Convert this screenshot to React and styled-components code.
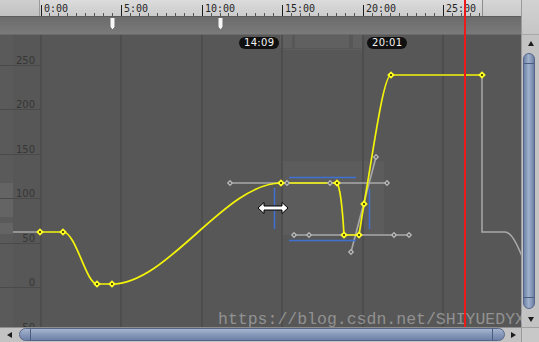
import React from "react";
import styled, { createGlobalStyle } from "styled-components";

const Global = createGlobalStyle`
  html, body { margin: 0; padding: 0; background: #575757; }
  body { font-family: "DejaVu Sans", sans-serif; }
`;

const X0 = 40.5;
const PX5 = 80.55; // px per 5 seconds
const tx = (sec) => X0 + (sec / 5) * PX5;

const Frame = styled.div`
  position: relative;
  width: 539px;
  height: 342px;
  display: grid;
  grid-template-columns: 521px 18px;
  grid-template-rows: 17px 18px 292px 15px;
  overflow: hidden;
  background: #575757;
`;

const Ruler = styled.div`
  grid-column: 1;
  grid-row: 1;
  display: flex;
  box-sizing: border-box;
  border-bottom: 1px solid #5c5c5c;
  background: linear-gradient(#dcdcdc, #cbcbcb);
`;

const RulerCorner = styled.div`
  width: 40px;
  flex: 0 0 40px;
  background: linear-gradient(#cfcfcf, #c1c1c1);
  border-right: 1px solid #9a9a9a;
  box-sizing: border-box;
`;

const RulerSvg = styled.svg`
  flex: 0 0 442px;
  height: 16px;
  display: block;
`;

const RulerEnd = styled.div`
  flex: 1;
  border-left: 1px solid #8c8c8c;
  background: linear-gradient(#d6d6d6, #c9c9c9);
`;

const EventsBar = styled.div`
  grid-column: 1;
  grid-row: 2;
  position: relative;
  box-sizing: border-box;
  background: linear-gradient(#6c6c6c, #757575 70%, #7b7b7b);
  border-bottom: 1px solid #6a6a6a;
`;

const Marker = styled.svg`
  position: absolute;
  top: 0;
  width: 7px;
  height: 14px;
`;

const Graph = styled.div`
  grid-column: 1;
  grid-row: 3;
  position: relative;
  overflow: hidden;
  background: #575757;
`;

const CurveSvg = styled.svg`
  display: block;
  width: 521px;
  height: 292px;
`;

const Pill = styled.div`
  position: absolute;
  top: 2px;
  height: 12px;
  padding: 0 5px;
  border-radius: 6px;
  background: #101010;
  color: #f4f4f4;
  font: 10px/12px "DejaVu Sans", sans-serif;
  letter-spacing: 0.3px;
`;

const Cursor = styled.svg`
  position: absolute;
  left: 256px;
  top: 166px;
  width: 34px;
  height: 14px;
`;

const SideColumn = styled.div`
  grid-column: 2;
  grid-row: 1 / 4;
  display: flex;
  flex-direction: column;
  background: #c4c4c4;
  border-left: 1px solid #9a9a9a;
`;

const SideTop = styled.div`
  flex: 0 0 35px;
  background: linear-gradient(#d2d2d2, #c6c6c6);
  border-bottom: 1px solid #a8a8a8;
  box-sizing: border-box;
`;

const VScroll = styled.div`
  flex: 1;
  display: flex;
  flex-direction: column;
  background: #c3c3c3;
`;

const ArrowBtn = styled.div`
  flex: 0 0 ${(p) => p.$size}px;
  display: flex;
  align-items: center;
  justify-content: center;
`;

const Tri = styled.div`
  width: 0;
  height: 0;
  ${(p) =>
    p.$dir === "up"
      ? "border-left:3.5px solid transparent;border-right:3.5px solid transparent;border-bottom:5px solid #1c1c1c;"
      : p.$dir === "down"
      ? "border-left:3.5px solid transparent;border-right:3.5px solid transparent;border-top:5px solid #1c1c1c;"
      : p.$dir === "left"
      ? "border-top:3.5px solid transparent;border-bottom:3.5px solid transparent;border-right:5px solid #1c1c1c;"
      : "border-top:3.5px solid transparent;border-bottom:3.5px solid transparent;border-left:5px solid #1c1c1c;"}
`;

const VThumb = styled.div`
  position: relative;
  flex: 1;
  margin: 2px 4px 2px 1px;
  border: 1px solid #56668a;
  border-radius: 7px;
  background: linear-gradient(90deg, #6f82a7, #9fb0cb 45%, #8a9cbc 70%, #6b7ea3);
  &::before,
  &::after {
    content: "";
    position: absolute;
    left: 0;
    right: 0;
    height: 1px;
    background: #4d5d7e;
  }
  &::before { top: 9px; }
  &::after { bottom: 10px; }
`;

const HScroll = styled.div`
  grid-column: 1;
  grid-row: 4;
  display: flex;
  box-sizing: border-box;
  border-top: 1px solid #8e8e8e;
  background: #c3c3c3;
`;

const HThumb = styled.div`
  position: relative;
  flex: 1;
  margin: 0 1px 1px 1px;
  border: 1px solid #56668a;
  border-radius: 7px;
  background: linear-gradient(#a7b6cf, #8799bb 50%, #6e81a6);
  &::before,
  &::after {
    content: "";
    position: absolute;
    top: 0;
    bottom: 0;
    width: 1px;
    background: #4d5d7e;
  }
  &::before { left: 10px; }
  &::after { right: 11px; }
`;

const Corner = styled.div`
  grid-column: 2;
  grid-row: 4;
  background: #c8c8c8;
  border-left: 1px solid #9a9a9a;
  border-top: 1px solid #a0a0a0;
`;

const Playhead = styled.div`
  position: absolute;
  left: 464px;
  top: 0;
  width: 2px;
  height: 327px;
  background: #ee1a1a;
  pointer-events: none;
`;

const Watermark = styled.div`
  position: absolute;
  left: 218px;
  top: 312px;
  font: 16.5px/16.5px "Liberation Mono", "Courier New", monospace;
  color: rgba(205, 205, 205, 0.5);
  white-space: nowrap;
  pointer-events: none;
`;

/* ---------- data ---------- */
const yVal = (v) => 287 - v * 0.89 - 35; // graph-local y
const yLabels = [250, 200, 150, 100, 50, 0, -50];
const majors = [0, 1, 2, 3, 4, 5];

const keys = [
  [40, 232], [63, 232], [97, 284], [112, 284], [281, 183], [337, 183],
  [344, 235], [359, 235], [364, 204], [391, 75], [482, 75],
].map(([x, y]) => [x, y - 35]);

const handles = [
  [230, 183], [287, 183], [330, 183], [387, 183],
  [294, 235], [309, 235], [394, 235], [409, 235],
  [351, 252], [376, 157],
].map(([x, y]) => [x, y - 35]);

const events = [4.47, 11.19];

function Diamond({ x, y, r, fill, dot }) {
  return (
    <g>
      <polygon points={`${x},${y - r} ${x + r},${y} ${x},${y + r} ${x - r},${y}`} fill={fill} />
      <rect x={x - 1} y={y - 1} width={2} height={2} fill={dot} />
    </g>
  );
}

function RulerScale() {
  const ticks = [];
  for (let i = 0; i < 50; i++) {
    const x = Math.round(0.5 + (i * PX5) / 9) + 0.5;
    if (x > 441) break;
    const major = i % 9 === 0;
    ticks.push(
      <line key={i} x1={x} x2={x} y1={major ? 5 : 13} y2={16} stroke={major ? "#1e1e1e" : "#555"} strokeWidth={1} />
    );
  }
  return (
    <RulerSvg viewBox="0 0 442 16">
      {ticks}
      {majors.map((k) => (
        <text key={k} x={Math.round(0.5 + k * PX5) + 3} y={11.5} fontFamily="'DejaVu Sans Mono', monospace" fontSize="10" fill="#262626">
          {`${k * 5}:00`}
        </text>
      ))}
    </RulerSvg>
  );
}

function CurveChart() {
  const curve =
    "M40 197 H63 C76 197 86 249 97 249 H112 C168 249 225 148 281 148 H337 " +
    "C339 151 342 165 344 200 H359 L364 169 C372 125 383 40 391 40 H482";
  const post = "M482 40 V197 H505 C518 197 528 249 539 249";
  return (
    <CurveSvg viewBox="0 0 521 292">
      {/* left strip */}
      <rect x="0" y="0" width="13" height="292" fill="#5a5a5a" />
      <rect x="0" y="148" width="13" height="34" fill="#646464" />
      <rect x="0" y="188" width="13" height="11" fill="#646464" />
      {/* selection fill */}
      <rect x="281" y="126" width="103" height="74" fill="#ffffff" opacity="0.03" />
      {/* top indicator boxes */}
      <rect x="280" y="0" width="12" height="13" fill="#606060" />
      <rect x="295" y="0" width="54" height="13" fill="#606060" />
      <rect x="353" y="0" width="10" height="13" fill="#606060" />
      <rect x="283" y="14" width="80" height="1" fill="#5f5f5f" />
      {/* grid */}
      {yLabels.map((v) => (
        <line key={v} x1="0" x2="40" y1={Math.round(yVal(v)) + 0.5} y2={Math.round(yVal(v)) + 0.5} stroke="#4a4a4a" />
      ))}
      {majors.map((k) => {
        const x = Math.round(X0 + k * PX5);
        return <line key={k} x1={x} x2={x} y1="0" y2="292" stroke="#4b4b4b" strokeWidth="1.6" />;
      })}
      {yLabels.map((v) => (
        <text key={v} x="35" y={Math.round(yVal(v)) - 1} textAnchor="end" fontFamily="'DejaVu Sans', sans-serif" fontSize="10" fill="#363636">
          {v}
        </text>
      ))}
      {/* wrap curves */}
      <line x1="13" x2="40" y1="197" y2="197" stroke="#a8a8a8" strokeWidth="1.5" />
      <path d={post} fill="none" stroke="#a9a9a9" strokeWidth="1.5" />
      {/* tangent handles */}
      <g stroke="#a9a9a9" strokeWidth="1.6">
        <line x1="230" x2="387" y1="148" y2="148" />
        <line x1="294" x2="409" y1="200" y2="200" />
        <line x1="351" y1="217" x2="376" y2="122" />
      </g>
      {/* blue selection brackets */}
      <g stroke="#3f71d2" strokeWidth="1.5">
        <line x1="274.5" x2="274.5" y1="153" y2="194" />
        <line x1="369.5" x2="369.5" y1="154" y2="194" />
        <line x1="289" x2="356" y1="142.5" y2="142.5" />
        <line x1="289" x2="356" y1="205.5" y2="205.5" />
      </g>
      {/* curve */}
      <path d={curve} fill="none" stroke="#f4f40a" strokeWidth="1.7" />
      {handles.map(([x, y], i) => (
        <Diamond key={i} x={x} y={y} r={3.2} fill="#b4b4b4" dot="#6a6a6a" />
      ))}
      {keys.map(([x, y], i) => (
        <Diamond key={i} x={x} y={y} r={3.8} fill="#ffff22" dot="#555500" />
      ))}
    </CurveSvg>
  );
}

export default function App() {
  return (
    <>
      <Global />
      <Frame>
        <Ruler>
          <RulerCorner />
          <RulerScale />
          <RulerEnd />
        </Ruler>
        <EventsBar>
          {events.map((t, i) => (
            <Marker key={i} viewBox="0 0 7 14" style={{ left: `${tx(t) - 3.5}px` }}>
              <path d="M1 0.5 H6 V10 L3.5 13 L1 10 Z" fill="#f6f6f6" stroke="#6e6e6e" strokeWidth="1" />
            </Marker>
          ))}
        </EventsBar>
        <Graph>
          <CurveChart />
          <Pill style={{ left: "239px" }}>14:09</Pill>
          <Pill style={{ left: "367px" }}>20:01</Pill>
          <Cursor viewBox="0 0 34 14">
            <path
              d="M2 7 L8 1.5 V5 H26 V1.5 L32 7 L26 12.5 V9 H8 V12.5 Z"
              fill="#ffffff"
              stroke="#000"
              strokeWidth="1"
              strokeLinejoin="round"
            />
          </Cursor>
        </Graph>
        <SideColumn>
          <SideTop />
          <VScroll>
            <ArrowBtn $size={16}><Tri $dir="up" /></ArrowBtn>
            <VThumb />
            <ArrowBtn $size={16}><Tri $dir="down" /></ArrowBtn>
          </VScroll>
        </SideColumn>
        <HScroll>
          <ArrowBtn $size={18}><Tri $dir="left" /></ArrowBtn>
          <HThumb />
          <ArrowBtn $size={15}><Tri $dir="right" /></ArrowBtn>
        </HScroll>
        <Corner />
        <Playhead />
        <Watermark>https://blog.csdn.net/SHIYUEDYX</Watermark>
      </Frame>
    </>
  );
}
